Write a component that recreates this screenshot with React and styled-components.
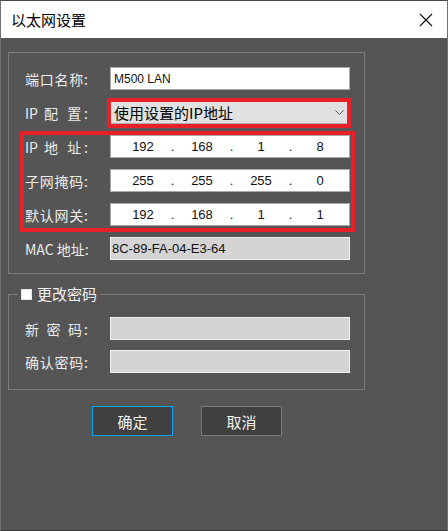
import React from "react";
import styled, { createGlobalStyle } from "styled-components";

const GlobalStyle = createGlobalStyle`
  html, body { margin: 0; padding: 0; background: #555555; }
  body { font-family: "Noto Sans CJK SC", "Noto Sans", sans-serif; }
  * { box-sizing: border-box; }
`;

const Window = styled.div`
  width: 448px;
  height: 531px;
  border: 1px solid #707070;
  border-top-color: #4a4a4a;
  border-bottom-color: #3a3a3a;
  background: #555555;
  display: flex;
  flex-direction: column;
`;

const TitleBar = styled.div`
  height: 37px;
  flex: none;
  background: #ffffff;
  display: flex;
  align-items: center;
  justify-content: space-between;
  padding: 0 14px 0 10px;
`;

const Title = styled.span`
  font-size: 15px;
  color: #000;
  line-height: 20px;
`;

const CloseBtn = styled.span`
  display: flex;
  width: 14px;
  height: 14px;
  align-items: center;
  justify-content: center;
`;

const Body = styled.div`
  padding: 14px 0 0 7px;
  display: flex;
  flex-direction: column;
`;

const Group = styled.div`
  position: relative;
  width: 357px;
  border: 1px solid #7c7c7c;
  padding: 14px 0 13px 16px;
  display: flex;
  flex-direction: column;
  gap: 11px;
`;

const FieldGroup = styled.fieldset`
  margin: 10px 0 0 0;
  min-inline-size: 0;
  width: 357px;
  border: 1px solid #7c7c7c;
  padding: 13px 0 16px 16px;
  display: flex;
  flex-direction: column;
  gap: 10px;
`;

const Legend = styled.legend`
  margin-left: -7px;
  padding: 0 3px;
  height: 20px;
  display: flex;
  align-items: center;
  gap: 5px;
  font-size: 15px;
  line-height: 20px;
  color: #f0f0f0;
`;

const CheckBox = styled.span`
  width: 11px;
  height: 11px;
  background: #ffffff;
  border: 1px solid #e6e6e6;
  flex: none;
`;

const Row = styled.div`
  display: grid;
  grid-template-columns: 85px 240px;
  align-items: center;
  height: 23px;
`;

const Label = styled.span`
  width: 63px;
  font-size: 14px;
  line-height: 20px;
  color: #ececec;
  text-align: justify;
  text-align-last: justify;
  white-space: nowrap;
`;

const TextBox = styled.div`
  height: 23px;
  background: ${(p) => (p.$disabled ? "#d4d4d4" : "#ffffff")};
  border: 1px solid ${(p) => (p.$disabled ? "#f2f2f2" : "#a8a8a8")};
  display: flex;
  align-items: center;
  padding-left: ${(p) => (p.$disabled ? "1px" : "3px")};
  font-family: "Liberation Sans", Arial, sans-serif;
  font-size: ${(p) => p.$size || 13}px;
  color: #111;
`;

const Select = styled.div`
  height: 23px;
  background: #e1e1e1;
  border: 1px solid #adadad;
  display: flex;
  align-items: center;
  justify-content: space-between;
  padding: 0 5px 0 3px;
  font-size: 15px;
  color: #000;
`;

const IpBox = styled.div`
  height: 23px;
  background: #ffffff;
  border: 1px solid #a8a8a8;
  display: grid;
  grid-template-columns: 40px 19px 40px 19px 40px 19px 40px;
  align-items: center;
  padding-left: 12px;
  font-family: "Liberation Sans", Arial, sans-serif;
  font-size: 13px;
  color: #111;
  text-align: center;
`;

const Mark = styled.div`
  position: absolute;
  border: 4px solid #e8202a;
  pointer-events: none;
`;

const ButtonRow = styled.div`
  display: flex;
  gap: 28px;
  margin: 16px 0 0 84px;
`;

const Button = styled.div`
  width: 81px;
  height: 30px;
  display: flex;
  align-items: center;
  justify-content: center;
  background: #404040;
  border-width: 1px;
  border-style: solid;
  border-color: ${(p) => (p.$primary ? "#0aa3f5" : "#7a7a7a")};
  color: #f2f2f2;
  font-size: 15px;
  cursor: default;
`;

const Ip = ({ parts }) => (
  <IpBox>
    <span>{parts[0]}</span>
    <span>.</span>
    <span>{parts[1]}</span>
    <span>.</span>
    <span>{parts[2]}</span>
    <span>.</span>
    <span>{parts[3]}</span>
  </IpBox>
);

export default function App() {
  return (
    <>
      <GlobalStyle />
      <Window>
        <TitleBar>
          <Title>以太网设置</Title>
          <CloseBtn>
            <svg width="14" height="14" viewBox="0 0 14 14">
              <path d="M1 1 L13 13 M13 1 L1 13" stroke="#111" strokeWidth="1.1" fill="none" />
            </svg>
          </CloseBtn>
        </TitleBar>
        <Body>
          <Group>
            <Row>
              <Label>端口名称:</Label>
              <TextBox $size={12}>M500 LAN</TextBox>
            </Row>
            <Row>
              <Label>IP 配 置:</Label>
              <Select>
                <span>使用设置的IP地址</span>
                <svg width="9" height="6" viewBox="0 0 9 6">
                  <path d="M0.5 0.5 L4.5 4.5 L8.5 0.5" stroke="#555" strokeWidth="1" fill="none" />
                </svg>
              </Select>
            </Row>
            <Row>
              <Label>IP 地 址:</Label>
              <Ip parts={["192", "168", "1", "8"]} />
            </Row>
            <Row>
              <Label>子网掩码:</Label>
              <Ip parts={["255", "255", "255", "0"]} />
            </Row>
            <Row>
              <Label>默认网关:</Label>
              <Ip parts={["192", "168", "1", "1"]} />
            </Row>
            <Row>
              <Label>MAC 地址:</Label>
              <TextBox $disabled>8C-89-FA-04-E3-64</TextBox>
            </Row>
            <Mark style={{ left: 98, top: 45, width: 244, height: 30 }} />
            <Mark style={{ left: 11, top: 78, width: 335, height: 101 }} />
          </Group>
          <FieldGroup>
            <Legend>
              <CheckBox />
              更改密码
            </Legend>
            <Row>
              <Label>新 密 码:</Label>
              <TextBox $disabled />
            </Row>
            <Row>
              <Label>确认密码:</Label>
              <TextBox $disabled />
            </Row>
          </FieldGroup>
          <ButtonRow>
            <Button $primary>确定</Button>
            <Button>取消</Button>
          </ButtonRow>
        </Body>
      </Window>
    </>
  );
}
